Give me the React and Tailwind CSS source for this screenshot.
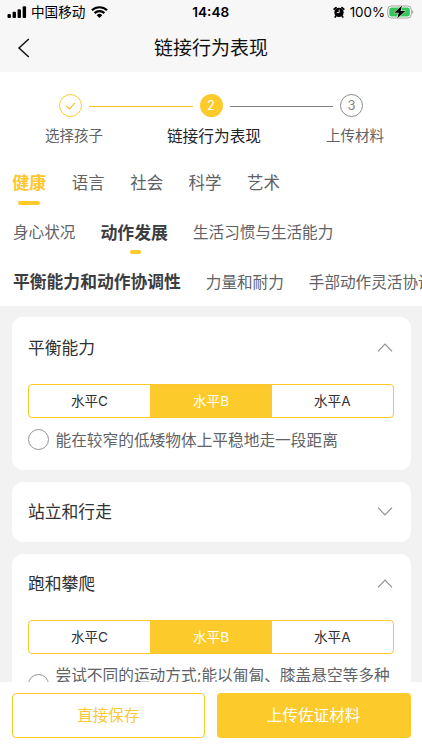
import React from 'react';

function StatusBar() {
  return (
    <div className="flex h-6 items-center pl-[7px] pr-[8px] text-black">
      <svg className="h-[12px] w-[20px]" viewBox="0 0 20 12">
        <rect x="0.5" y="8" width="3.4" height="4" rx="1" />
        <rect x="5.6" y="5.8" width="3.4" height="6.2" rx="1" />
        <rect x="10.6" y="3.2" width="3.4" height="8.8" rx="1" />
        <rect x="15.7" y="0.3" width="3.4" height="11.7" rx="1" />
      </svg>
      <span className="ml-[4px] w-[55px] whitespace-nowrap text-[13.6px]">中国移动</span>
      <svg className="ml-[5px] h-[12px] w-[17px]" viewBox="0 0 17 12">
        <path d="M0.9 4.3a11 11 0 0 1 15.2 0M3.6 7.1a7 7 0 0 1 9.8 0" fill="none" stroke="#000" strokeWidth="2.2" />
        <path d="M5.7 9.2a4 4 0 0 1 5.6 0L8.5 12z" />
      </svg>
      <span className="ml-[84.5px] w-[37.5px] whitespace-nowrap text-[13.6px] font-semibold">14:48</span>
      <svg className="ml-[103px] h-[12px] w-[12px]" viewBox="0 0 12 12">
        <circle cx="6" cy="6.4" r="4.7" />
        <path d="M3 9.6l-0.8 1.4M9 9.6l0.8 1.4M1.2 3.2L3 1.6M10.8 3.2L9 1.6" stroke="#000" strokeWidth="1.7" strokeLinecap="round" />
        <path d="M6.2 3.6v3H3.8" fill="none" stroke="#fff" strokeWidth="0.9" />
      </svg>
      <span className="ml-[5px] w-[36.5px] whitespace-nowrap text-[13.4px]">100%</span>
      <svg className="ml-px h-[14px] w-[27px]" viewBox="0 0 27 14">
        <rect x="0.8" y="1" width="23.6" height="12" rx="3.6" fill="#fff" stroke="#a3a3a3" />
        <rect x="2.3" y="2.5" width="20.6" height="9" rx="2.2" fill="#35c759" />
        <path d="M25.3 5.2c1.5.4 1.5 3.2 0 3.6z" fill="#a3a3a3" />
        <path d="M15 0.5L7.2 7.7h4.6L10.2 13.5 18.4 6.1h-4.7z" stroke="#fff" strokeWidth="1" paintOrder="stroke" />
      </svg>
    </div>
  );
}

function Header() {
  return (
    <header className="h-[72px] shrink-0 bg-[#f7f7f7]">
      <StatusBar />
      <div className="grid h-12 grid-cols-[60px_1fr_60px] items-start">
        <svg className="ml-[17px] mt-[14px] h-[20px] w-[13px]" viewBox="0 0 13 20" fill="none" stroke="#111" strokeWidth="1.5">
          <path d="M11.8 1L2 10l9.8 9" />
        </svg>
        <h1 className="text-center text-[19px] leading-[50px] text-[#111]">链接行为表现</h1>
      </div>
    </header>
  );
}

function Steps() {
  return (
    <div className="h-[76px] pt-[22px]">
      <div className="flex items-center px-[59px]">
        <span className="flex size-[23px] items-center justify-center rounded-full border-[1.5px] border-[#fccb2b]">
          <svg className="h-[8px] w-[11px]" viewBox="0 0 11 8" fill="none" stroke="#f5c02a" strokeWidth="1.1">
            <path d="M1 3.6l3.4 3.3L10 0.9" />
          </svg>
        </span>
        <span className="mx-[7px] mt-px h-px flex-1 bg-[#fbc01a]" />
        <span className="flex size-[23px] items-center justify-center rounded-full bg-[#fccb2b] text-[13px] text-white">2</span>
        <span className="mx-[7px] mt-px h-px flex-1 bg-[#808080]" />
        <span className="flex size-[23px] items-center justify-center rounded-full border border-[#8c8c8c] text-[13px] text-[#888]">3</span>
      </div>
      <div className="mt-[7.5px] grid grid-cols-[1fr_134px_1fr] items-center text-center leading-[22px]">
        <span className="pl-[4px] text-[14.5px] text-[#606266]">选择孩子</span>
        <span className="pl-[6px] pt-px text-[15.7px] text-[#222327]">链接行为表现</span>
        <span className="pl-[10px] text-[14.5px] text-[#606266]">上传材料</span>
      </div>
    </div>
  );
}

function Tabs() {
  return (
    <nav className="whitespace-nowrap text-[#606266]">
      <div className="flex h-[58px] gap-[25.4px] pl-[12px] pt-[23px] text-[16.5px] leading-6">
        <div className="flex w-[34.4px] flex-col items-center">
          <span className="text-[17px] font-bold text-[#fcc72b]">健康</span>
          <span className="mt-[6px] h-[3.5px] w-[22px] rounded-full bg-[#fccb2b]" />
        </div>
        <span>语言</span>
        <span>社会</span>
        <span>科学</span>
        <span>艺术</span>
      </div>
      <div className="flex h-[50px] gap-[25px] pl-[13px] pt-[15px] text-[15.6px] leading-6">
        <span>身心状况</span>
        <div className="flex flex-col items-center">
          <span className="text-[16.9px] font-bold text-[#3c3d40]">动作发展</span>
          <span className="ml-[3px] mt-[5px] h-[4px] w-[11px] rounded-full bg-[#fccb2b]" />
        </div>
        <span>生活习惯与生活能力</span>
      </div>
      <div className="flex h-[50px] gap-[25px] overflow-hidden pl-[13px] pt-[14px] text-[15.6px] leading-6">
        <span className="text-[16.8px] font-bold text-[#3c3d40]">平衡能力和动作协调性</span>
        <span className="pt-px">力量和耐力</span>
        <span className="pt-px">手部动作灵活协调</span>
      </div>
    </nav>
  );
}

function Chevron({ open }) {
  return (
    <svg className="h-[9px] w-[16px]" viewBox="0 0 16 9" fill="none" stroke="#8f9196" strokeWidth="1.2">
      <path d={open ? 'M1 8.3L8 1.2l7 7.1' : 'M1 0.7l7 7.1 7-7.1'} />
    </svg>
  );
}

function Levels() {
  return (
    <div className="grid h-[34px] grid-cols-[121px_122px_1fr] overflow-hidden rounded-[4px] border border-[#fcc72b] text-center text-[13.6px] leading-[33px] text-[#303133]">
      <span>水平C</span>
      <span className="bg-[#fccb2b] text-white">水平B</span>
      <span>水平A</span>
    </div>
  );
}

function Card({ title, open, className, titleClass, children }) {
  return (
    <section className={`shrink-0 rounded-[11px] bg-white pl-[16.5px] pr-[17px] ${className}`}>
      <div className="flex h-[60.5px] items-center justify-between pr-[1px]">
        <h2 className={`text-[16.8px] leading-6 text-[#303133] ${titleClass}`}>{title}</h2>
        <Chevron open={open} />
      </div>
      {children}
    </section>
  );
}

function Option({ children, className }) {
  return (
    <div className="flex text-[15.7px] leading-[24px] text-[#606266]">
      <span className={`mr-[6.5px] size-[21px] shrink-0 rounded-full border border-[#909399] ${className}`} />
      <span className="whitespace-nowrap">{children}</span>
    </div>
  );
}

export default function App() {
  return (
    <div className="flex h-[750px] w-[422px] flex-col overflow-hidden bg-white font-['Inter','Noto_Sans_CJK_SC',sans-serif]">
      <Header />
      <div className="h-[234px] shrink-0">
        <Steps />
        <Tabs />
      </div>
      <main className="flex min-h-0 flex-1 flex-col gap-[11.5px] overflow-hidden bg-[#f2f2f2] pl-[11.5px] pr-[11.5px] pt-[11px]">
        <Card title="平衡能力" open className="h-[153px]" titleClass="pt-[2px]">
          <div className="mt-[6.5px]"><Levels /></div>
          <div className="mt-[11px]"><Option className="">能在较窄的低矮物体上平稳地走一段距离</Option></div>
        </Card>
        <Card title="站立和行走" open={false} className="h-[60.5px]" titleClass="" />
        <Card title="跑和攀爬" open className="h-[170px]" titleClass="">
          <div className="mt-[6px]"><Levels /></div>
          <div className="mt-[9.5px]"><Option className="mt-[10.5px]">尝试不同的运动方式;能以匍匐、膝盖悬空等多种</Option></div>
        </Card>
      </main>
      <footer className="grid h-[68px] shrink-0 grid-cols-2 gap-[11.5px] bg-white px-[11.5px] pb-[12px] pt-[11px] text-[15.6px]">
        <button className="rounded-[4px] border border-[#fcc72b] text-[#f9c83a]">直接保存</button>
        <button className="rounded-[4px] bg-[#fccb2b] text-white">上传佐证材料</button>
      </footer>
    </div>
  );
}
